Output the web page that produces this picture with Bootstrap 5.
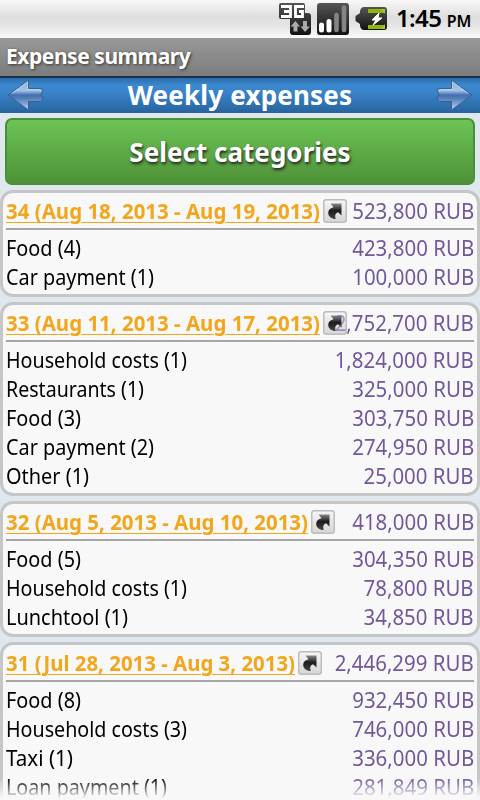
<!DOCTYPE html>
<html lang="en">
<head>
<meta charset="utf-8">
<meta name="viewport" content="width=device-width, initial-scale=1">
<title>Expense summary</title>
<link rel="stylesheet" href="https://cdn.jsdelivr.net/npm/bootstrap@5.3.0/dist/css/bootstrap.min.css">
<style>
body{font-family:"Noto Sans","Open Sans",sans-serif;background:#dfe7ef;color:#000;height:800px;font-size:22px;line-height:29px;white-space:nowrap}
.status{height:38px;background:linear-gradient(#f8f8f8,#dedede 45%,#e6e6e6 70%,#fafafa)}
.status-icons{margin-left:276px}
.clock{font-weight:600;font-size:24px;letter-spacing:-.65px;line-height:40px;margin-left:8px;width:84px}
.clock small{font-size:16px;font-weight:600;letter-spacing:-.2px}
.titlebar{height:38px;background:linear-gradient(#999,#7c7c7c);color:#fff;font-weight:700;font-size:21px;letter-spacing:-.45px;line-height:37px;padding-left:6px;text-shadow:1px 1px 3px #333}
.weekbar{height:37px;border-top:2px solid #1c3347;background:linear-gradient(#2b6dab,#3c89d0 22%,#3984cb 40%,#28639c);color:#fff;padding:0 7px}
.weekbar h1{font-size:26px;font-weight:700;letter-spacing:.2px;line-height:35px}
.flip{transform:scaleX(-1)}
.pick{height:67px;margin:5px 5px 5px;border:2px solid #4c8d37!important;border-radius:7px;background:linear-gradient(#6cc455,#4f9239)!important;color:#fff!important;font-size:26px;font-weight:700;letter-spacing:.02px;text-shadow:1px 2px 3px #222;padding:1px 0 0}
.week{border:3px solid #c6c6c6;border-radius:13px;background:#f8f8f8;padding:0 3px 3px;margin-bottom:5px}
.week-head{height:37px;border-bottom:2px solid #a6a6a6;margin-bottom:3px;padding-top:3px}
.week-head a{color:#f2a61c;font-weight:700;font-size:22px;text-decoration:underline;text-decoration-thickness:1px;text-underline-offset:3px}
.shortcut{margin:3px 0 0 3px}
.line{height:29px}
[data-w]{transform-origin:left center}
.sum{color:#72589a;transform-origin:right center}
.over{position:absolute;right:0;top:3px}
.over-icon{-webkit-mask-image:linear-gradient(90deg,rgba(0,0,0,.6) 12px,#000 12px)}
.fade-end{position:absolute;left:0;right:0;bottom:0;height:22px;background:linear-gradient(rgba(248,248,248,0),#f8f8f8 95%)}
</style>
</head>
<body class="overflow-hidden position-relative">
<svg width="0" height="0" class="position-absolute" aria-hidden="true">
<defs>
<linearGradient id="steel" x1="0" y1="0" x2="0" y2="1"><stop offset="0" stop-color="#86a9d6"/><stop offset=".35" stop-color="#a3c3e8"/><stop offset=".5" stop-color="#4470b0"/><stop offset=".62" stop-color="#5580bb"/><stop offset="1" stop-color="#bcd6f0"/></linearGradient>
<linearGradient id="tile" x1="0" y1="0" x2="0" y2="1"><stop offset="0" stop-color="#f6f6f6"/><stop offset="1" stop-color="#d6d6d6"/></linearGradient>
<linearGradient id="ink" x1="0" y1="0" x2="0" y2="1"><stop offset="0" stop-color="#888"/><stop offset=".45" stop-color="#1c1c1c"/><stop offset="1" stop-color="#444"/></linearGradient>
<linearGradient id="dark" x1="0" y1="0" x2="0" y2="1"><stop offset="0" stop-color="#555"/><stop offset="1" stop-color="#111"/></linearGradient>
<symbol id="go" viewBox="0 0 24 24"><rect x=".75" y=".75" width="22.5" height="22.5" rx="2.5" fill="url(#tile)" stroke="#bdbdbd" stroke-width="1.5"/><path d="M7.500 4.500H18.500V16.500L15 13.200C12.500 14 11.500 16.500 12.800 20C8.500 20 5 17.500 5.200 13.500C5.500 10.500 7.500 9 10.500 8.300Z" fill="url(#ink)"/></symbol>
<symbol id="arrow" viewBox="0 0 37 33"><path d="M1 10.500L3 10V9.500H15.500V1L36 16L15.500 31V22.500H3.500L1 20L3 16Z" fill="url(#steel)" stroke="#3a5f92" stroke-width="1"/><path d="M4.500 10.500H16.500V3L32 14.500" fill="none" stroke="#c3daf2" stroke-opacity=".65"/></symbol>
</defs>
</svg>

<header>
<div class="status d-flex align-items-center">
<svg width="79" height="38" viewBox="0 0 79 38" class="status-icons flex-shrink-0" aria-label="3G signal">
<path d="M5 3H27Q29 3 29 5V13H32Q35 13 35 16V32Q35 35 32 35H17Q14 35 14 32V19H5Q3 19 3 17V5Q3 3 5 3Z" fill="url(#dark)"/>
<path d="M5 6.500H14.500V16.500H5M8 11.500H14.500M28 6.500H19.500V16.500H26.500V11.500H23" fill="none" stroke="#fff" stroke-width="2.800"/>
<path d="M19.500 21L24 26.500H21.500V31.500H17.500V26.500H14.500ZM29 32L24.500 26.500H27V21H31V26.500H34Z" fill="#aaa"/>
<rect x="41" y="3" width="32" height="32" rx="3" fill="url(#dark)"/>
<path d="M45.500 25V30M53 21.500V30" stroke="#fff" stroke-width="5" stroke-linecap="round"/>
<path d="M60.500 15V30M68 7.500V30" stroke="#858585" stroke-width="4.600" stroke-linecap="round"/>
</svg>
<svg width="33" height="38" viewBox="0 0 33 38" class="flex-shrink-0" aria-label="Battery charging"><path d="M9 7H29Q32 7 32 10V27Q32 30 29 30H9Q6 30 5 26V24L.5 21V16L5 13V11Q6 7 9 7Z" fill="url(#dark)"/><path d="M13 9H30V13H13ZM13 25H30V29H13Z" fill="#8eb80c"/><path d="M26 9H30V14ZM26 29H30V24Z" fill="#a5cd1b"/><path d="M24 13L17 20H21L18 25L27 18H23Z" fill="#fff" stroke="#fff"/></svg>
<div class="clock">1:45 <small>PM</small></div>
</div>
<div class="titlebar">Expense summary</div>
<nav class="weekbar d-flex align-items-center justify-content-between">
<svg width="37" height="33" class="flip" aria-label="Previous week"><use href="#arrow"/></svg>
<h1 class="m-0">Weekly expenses</h1>
<svg width="37" height="33" aria-label="Next week"><use href="#arrow"/></svg>
</nav>
</header>
<main>
<div class="d-grid"><button class="btn pick">Select categories</button></div>
<div id="weeks"></div>
</main>
<div class="fade-end"></div>
<script>
const weeks = [
 ["34 (Aug 18, 2013 - Aug 19, 2013)", 314, "523,800", [["Food (4)",75,"423,800"],["Car payment (1)",148,"100,000"]]],
 ["33 (Aug 11, 2013 - Aug 17, 2013)", 314, "2,752,700", [["Household costs (1)",181,"1,824,000"],["Restaurants (1)",138,"325,000"],["Food (3)",75,"303,750"],["Car payment (2)",148,"274,950"],["Other (1)",83,"25,000"]]],
 ["32 (Aug 5, 2013 - Aug 10, 2013)", 302, "418,000", [["Food (5)",75,"304,350"],["Household costs (1)",181,"78,800"],["Lunchtool (1)",122,"34,850"]]],
 ["31 (Jul 28, 2013 - Aug 3, 2013)", 289, "2,446,299", [["Food (8)",75,"932,450"],["Household costs (3)",181,"746,000"],["Taxi (1)",67,"336,000"],["Loan payment (1)",161,"281,849"]]]
];
const sumWidth = {6:110, 7:122, 9:139};
const sum = (v, cls = "") => `<span class="sum ${cls}" data-w="${sumWidth[v.length]}">${v} RUB</span>`;
document.getElementById("weeks").innerHTML = weeks.map(([name, w, total, rows], i) => `
<section class="week">
<div class="week-head d-flex position-relative"><a href="#" data-w="${w}">${name}</a><svg width="24" height="24" class="shortcut flex-shrink-0"><use href="#go"/></svg>${sum(total, "over" + (i === 1 ? " over-icon" : ""))}</div>
${rows.map(([label, lw, v]) => `<div class="line d-flex justify-content-between"><span data-w="${lw}">${label}</span>${sum(v)}</div>`).join("")}
</section>`).join("");
document.querySelectorAll("[data-w]").forEach(el => {
  const natural = el.getBoundingClientRect().width, target = +el.dataset.w;
  el.style.transform = `scaleX(${target / natural})`;
  if (el.tagName === "A") el.style.marginRight = (target - natural) + "px";
});
</script>
<script src="https://cdn.jsdelivr.net/npm/bootstrap@5.3.0/dist/js/bootstrap.bundle.min.js"></script>
</body>
</html>
